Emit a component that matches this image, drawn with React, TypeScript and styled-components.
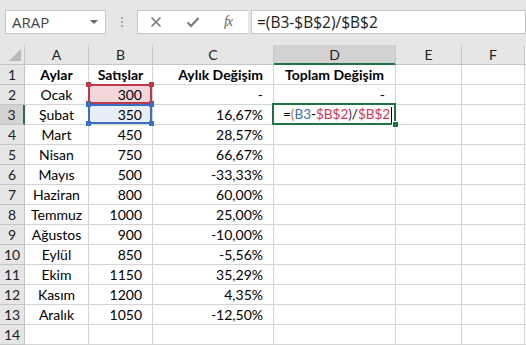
import React from "react";
import styled, { createGlobalStyle, css } from "styled-components";

const Global = createGlobalStyle`
  html, body { margin: 0; padding: 0; background: #ffffff; }
  body { width: 526px; height: 345px; overflow: hidden; }
`;

const Page = styled.div`
  width: 526px;
  height: 345px;
  display: flex;
  flex-direction: column;
  background: #ffffff;
  overflow: hidden;
`;

const Toolbar = styled.div`
  height: 45px;
  flex: none;
  background: #e6e6e6;
  display: flex;
  align-items: flex-start;
  padding-top: 10px;
  padding-left: 5px;
  box-sizing: border-box;
`;

const NameBox = styled.div`
  width: 101px;
  height: 24px;
  box-sizing: border-box;
  background: #fff;
  border: 1px solid #c6c6c6;
  display: flex;
  align-items: center;
  justify-content: space-between;
  padding: 0 7px 0 6px;
  font-family: "Open Sans", "Noto Sans", sans-serif;
  font-size: 15px;
  color: #444;
`;

const Caret = styled.span`
  width: 0;
  height: 0;
  border-left: 4px solid transparent;
  border-right: 4px solid transparent;
  border-top: 4px solid #666;
`;

const Dots = styled.div`
  width: 31px;
  height: 24px;
  display: flex;
  flex-direction: column;
  align-items: center;
  justify-content: center;
  gap: 2px;
  span {
    width: 2px;
    height: 2px;
    background: #a8a8a8;
  }
`;

const IconBox = styled.div`
  width: 111px;
  height: 24px;
  box-sizing: border-box;
  background: #fff;
  border: 1px solid #c6c6c6;
  border-right: none;
  display: flex;
  align-items: center;
  justify-content: space-around;
  padding: 0 4px 0 0;
`;

const Fx = styled.span`
  font-family: "Liberation Serif", serif;
  font-style: italic;
  font-size: 14px;
  color: #666;
  letter-spacing: -1px;
`;

const FormulaInput = styled.div`
  flex: 1;
  height: 24px;
  box-sizing: border-box;
  background: #fff;
  border: 1px solid #c6c6c6;
  margin-left: 3px;
  display: flex;
  align-items: center;
  padding-left: 5px;
  font-family: "Open Sans", "Noto Sans", sans-serif;
  font-size: 15.5px;
  color: #222;
`;

const Grid = styled.div`
  display: grid;
  grid-template-columns: 25px 64px 64px 121px 122px 66px 63px 1px;
  grid-auto-rows: 20px;
  font-family: Lato, "Noto Sans", sans-serif;
  font-size: 14px;
  color: #000;
`;

const HeadCell = styled.div<{ $sel?: boolean }>`
  background: ${(p) => (p.$sel ? "#d2d2d2" : "#e6e6e6")};
  border-right: 1px solid #c6c6c6;
  border-bottom: 1px solid ${(p) => (p.$sel ? "#217346" : "#c6c6c6")};
  ${(p) => p.$sel && css`box-shadow: inset 0 -1px 0 #217346;`}
  box-sizing: border-box;
  display: flex;
  align-items: center;
  justify-content: center;
  color: #222;
  font-size: 14px;
`;

const Corner = styled.div`
  background: #e6e6e6;
  border-right: 1px solid #c6c6c6;
  border-bottom: 1px solid #c6c6c6;
  box-sizing: border-box;
  position: relative;
  &::after {
    content: "";
    position: absolute;
    right: 3px;
    bottom: 3px;
    width: 0;
    height: 0;
    border-left: 12px solid transparent;
    border-bottom: 12px solid #b8b8b8;
  }
`;

const RowHead = styled.div<{ $sel?: boolean }>`
  background: ${(p) => (p.$sel ? "#d2d2d2" : "#e6e6e6")};
  border-right: ${(p) => (p.$sel ? "2px solid #217346" : "1px solid #c6c6c6")};
  border-bottom: 1px solid #c6c6c6;
  box-sizing: border-box;
  display: flex;
  align-items: center;
  justify-content: center;
  color: #222;
  font-size: 14px;
`;

const Cell = styled.div<{ $align?: "left" | "center" | "right"; $bold?: boolean }>`
  border-right: 1px solid #d4d4d4;
  border-bottom: 1px solid #d4d4d4;
  box-sizing: border-box;
  display: flex;
  align-items: center;
  justify-content: ${(p) =>
    p.$align === "center" ? "center" : p.$align === "right" ? "flex-end" : "flex-start"};
  padding: ${(p) => (p.$align === "right" ? "0 10px 0 3px" : "0 3px")};
  font-weight: ${(p) => (p.$bold ? 700 : 400)};
  white-space: nowrap;
  position: relative;
`;

const Pad = styled.div`
  border-bottom: 1px solid #d4d4d4;
  box-sizing: border-box;
`;

const RefBox = styled.div<{ $c: string; $bg: string }>`
  position: absolute;
  left: -1px;
  top: -1px;
  right: 0;
  bottom: 0;
  border: 2px solid ${(p) => p.$c};
  background: ${(p) => p.$bg};
  z-index: 1;
  & > i {
    position: absolute;
    width: 5px;
    height: 5px;
    background: ${(p) => p.$c};
  }
`;

const Handle = styled.i<{ $x: "l" | "r"; $y: "t" | "b" }>`
  ${(p) => (p.$x === "l" ? "left: -4px;" : "right: -4px;")}
  ${(p) => (p.$y === "t" ? "top: -4px;" : "bottom: -4px;")}
`;

const CellText = styled.span`
  position: relative;
  z-index: 2;
`;

const FormulaText = styled(CellText)`
  padding-left: 6px;
  font-size: 13.5px;
`;

const ActiveBox = styled.div`
  position: absolute;
  left: -2px;
  top: -2px;
  right: -1px;
  bottom: -1px;
  border: 2px solid #217346;
  z-index: 1;
  &::after {
    content: "";
    position: absolute;
    right: -4px;
    bottom: -4px;
    width: 5px;
    height: 5px;
    background: #217346;
    border-left: 1px solid #fff;
    border-top: 1px solid #fff;
  }
`;

const Tok = styled.span<{ $c: string }>`
  color: ${(p) => p.$c};
`;

const Cursor = styled.span`
  display: inline-block;
  width: 1px;
  height: 16px;
  background: #000;
  margin-left: 1px;
  vertical-align: middle;
`;

const rows: [string, string, string][] = [
  ["Ocak", "300", "-"],
  ["Şubat", "350", "16,67%"],
  ["Mart", "450", "28,57%"],
  ["Nisan", "750", "66,67%"],
  ["Mayıs", "500", "-33,33%"],
  ["Haziran", "800", "60,00%"],
  ["Temmuz", "1000", "25,00%"],
  ["Ağustos", "900", "-10,00%"],
  ["Eylül", "850", "-5,56%"],
  ["Ekim", "1150", "35,29%"],
  ["Kasım", "1200", "4,35%"],
  ["Aralık", "1050", "-12,50%"],
];

const Handles = () => (
  <>
    <Handle $x="l" $y="t" />
    <Handle $x="r" $y="t" />
    <Handle $x="l" $y="b" />
    <Handle $x="r" $y="b" />
  </>
);

export default function App() {
  const cols = ["A", "B", "C", "D", "E", "F"];
  return (
    <Page>
      <Global />
      <Toolbar>
        <NameBox>
          ARAP
          <Caret />
        </NameBox>
        <Dots>
          <span />
          <span />
          <span />
        </Dots>
        <IconBox>
          <svg width="12" height="12" viewBox="0 0 12 12">
            <path d="M1.5 1.5 L10.5 10.5 M10.5 1.5 L1.5 10.5" stroke="#777" strokeWidth="1.6" />
          </svg>
          <svg width="14" height="12" viewBox="0 0 14 12">
            <path d="M1.5 6.5 L5 10 L12.5 2" stroke="#777" strokeWidth="2" fill="none" />
          </svg>
          <Fx>fx</Fx>
        </IconBox>
        <FormulaInput>=(B3-$B$2)/$B$2</FormulaInput>
      </Toolbar>
      <Grid>
        <Corner />
        {cols.map((c) => (
          <HeadCell key={c} $sel={c === "D"}>
            {c}
          </HeadCell>
        ))}
        <Pad />
        <RowHead>1</RowHead>
        <Cell $align="center" $bold>Aylar</Cell>
        <Cell $align="center" $bold>Satışlar</Cell>
        <Cell $align="right" $bold>Aylık Değişim</Cell>
        <Cell $align="center" $bold>Toplam Değişim</Cell>
        <Cell />
        <Cell />
        <Pad />
        {rows.map(([m, s, c], i) => {
          const r = i + 2;
          return (
            <React.Fragment key={r}>
              <RowHead $sel={r === 3}>{r}</RowHead>
              <Cell $align="center">{m}</Cell>
              <Cell $align="right">
                {r === 2 && (
                  <RefBox $c="#c0394a" $bg="#f2d7da">
                    <Handles />
                  </RefBox>
                )}
                {r === 3 && (
                  <RefBox $c="#3a6fc4" $bg="#e8eef8">
                    <Handles />
                  </RefBox>
                )}
                <CellText>{s}</CellText>
              </Cell>
              <Cell $align="right">{c}</Cell>
              <Cell $align={r === 3 ? "left" : "right"}>
                {r === 2 && "-"}
                {r === 3 && (
                  <>
                    <ActiveBox />
                    <FormulaText>
                      <Tok $c="#000">=</Tok>
                      <Tok $c="#c8781c">(</Tok>
                      <Tok $c="#3a6fc4">B3</Tok>
                      <Tok $c="#000">-</Tok>
                      <Tok $c="#d0344a">$B$2</Tok>
                      <Tok $c="#4a2a5a">)</Tok>
                      <Tok $c="#000">/</Tok>
                      <Tok $c="#d0344a">$B$2</Tok>
                      <Cursor />
                    </FormulaText>
                  </>
                )}
              </Cell>
              <Cell />
              <Cell />
              <Pad />
            </React.Fragment>
          );
        })}
        <RowHead>14</RowHead>
        <Cell />
        <Cell />
        <Cell />
        <Cell />
        <Cell />
        <Cell />
        <Pad />
      </Grid>
    </Page>
  );
}
